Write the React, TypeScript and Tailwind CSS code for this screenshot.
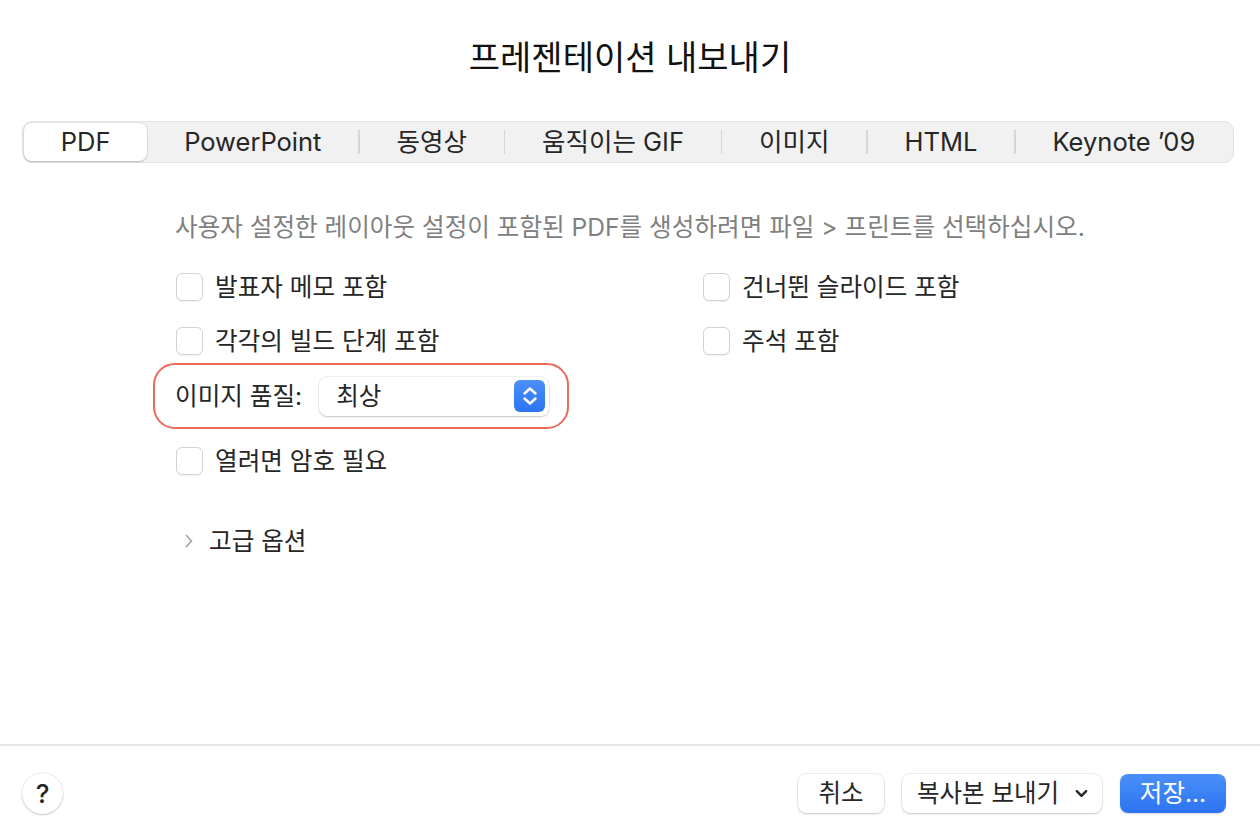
import React from "react";

const FONT = "font-['Inter','Noto_Sans_CJK_KR',sans-serif]";

const tabs = ["PDF", "PowerPoint", "동영상", "움직이는 GIF", "이미지", "HTML", "Keynote ’09"];

function Tabs() {
  return (
    <div className="ml-[22px] mt-[46px] w-[1212px] h-[42px] rounded-[10px] bg-[#f1f1f1] border border-[#e4e4e4] flex items-center p-px">
      {tabs.map((t, i) => {
        const active = i === 0;
        const showSep = i > 1;
        return (
          <div key={t} className="flex-auto flex items-stretch h-full">
            {showSep && <div className="w-[1.5px] h-[24px] self-center bg-[#d6d6d6]" />}
            <div
              className={
                "flex-1 flex items-center justify-center whitespace-nowrap text-[25.5px] text-[#262626] " +
                (active ? "bg-white rounded-[8px] shadow-[0_1px_2px_rgba(0,0,0,0.2),0_0_0_0.5px_rgba(0,0,0,0.08)]" : "")
              }
            >
              {t}
            </div>
          </div>
        );
      })}
    </div>
  );
}

function Checkbox({ label }: { label: string }) {
  return (
    <div className="flex items-center h-[40px]">
      <div className="w-[27px] h-[28px] rounded-[6px] border border-[#d3d3d3] bg-white shadow-[0_1px_1px_rgba(0,0,0,0.06)]" />
      <span className="ml-[12px] text-[24.6px] text-[#262626] whitespace-nowrap">{label}</span>
    </div>
  );
}

function Stepper() {
  return (
    <div className="w-[31px] h-[32px] rounded-[6px] bg-gradient-to-b from-[#4a8ff8] to-[#2c74f2] flex items-center justify-center">
      <svg viewBox="0 0 16 22" className="w-[16px] h-[22px]" fill="none" stroke="white" strokeWidth="2.5" strokeLinecap="round" strokeLinejoin="round">
        <path d="M2.5 8.5L8 3.5L13.5 8.5" />
        <path d="M2.5 13.5L8 18.5L13.5 13.5" />
      </svg>
    </div>
  );
}

export default function App() {
  return (
    <div className={"w-[1260px] h-[840px] bg-white flex flex-col " + FONT}>
      <h1 className="pt-[36px] h-[75px] text-center text-[34px] leading-[44px] text-[#111]">프레젠테이션 내보내기</h1>

      <Tabs />

      <div className="pl-[175px] mt-[44px]">
        <p className="h-[40px] flex items-center text-[24.6px] text-[#808080] whitespace-nowrap">
          사용자 설정한 레이아웃 설정이 포함된 PDF를 생성하려면 파일 &gt; 프린트를 선택하십시오.
        </p>

        <div className="mt-[20px] grid grid-cols-[527px_1fr] gap-y-[14px] pl-px">
          <Checkbox label="발표자 메모 포함" />
          <Checkbox label="건너뛴 슬라이드 포함" />
          <Checkbox label="각각의 빌드 단계 포함" />
          <Checkbox label="주석 포함" />
        </div>

        <div className="mt-[2px] -ml-[22px] w-[416px] h-[66px] rounded-[22px] border-[2.5px] border-[#ec6a5a] flex items-center pl-[20px]">
          <span className="text-[24.6px] text-[#262626] whitespace-nowrap">이미지 품질:</span>
          <div className="ml-[17px] w-[230px] h-[39px] rounded-[8px] bg-white shadow-[0_1px_2px_rgba(0,0,0,0.18),0_0_0_0.5px_rgba(0,0,0,0.1)] flex items-center justify-between pl-[17px] pr-[4px]">
            <span className="text-[24.6px] text-[#262626]">최상</span>
            <Stepper />
          </div>
        </div>

        <div className="mt-[12px] pl-px">
          <Checkbox label="열려면 암호 필요" />
        </div>

        <div className="mt-[40px] h-[40px] flex items-center pl-[10px]">
          <svg viewBox="0 0 8 14" className="w-[8px] h-[14px]" fill="none" stroke="#a8a8a8" strokeWidth="1.8" strokeLinecap="round" strokeLinejoin="round">
            <path d="M1.5 1.5L6.5 7L1.5 12.5" />
          </svg>
          <span className="ml-[16px] text-[24.6px] text-[#262626]">고급 옵션</span>
        </div>
      </div>

      <div className="flex-1" />

      <div className="h-[2px] bg-[#e6e6e6]" />

      <div className="h-[94px] flex items-center pl-[22px] pr-[34px]">
        <div className="w-[41px] h-[41px] rounded-full bg-white shadow-[0_1px_2px_rgba(0,0,0,0.2),0_0_0_0.5px_rgba(0,0,0,0.1)] flex items-center justify-center text-[26px] font-medium text-[#262626]">
          ?
        </div>
        <div className="flex-1" />
        <button className="w-[86px] h-[39px] rounded-[8px] bg-white shadow-[0_1px_2px_rgba(0,0,0,0.18),0_0_0_0.5px_rgba(0,0,0,0.12)] text-[24.5px] text-[#262626]">
          취소
        </button>
        <button className="ml-[18px] w-[200px] h-[39px] rounded-[8px] bg-white shadow-[0_1px_2px_rgba(0,0,0,0.18),0_0_0_0.5px_rgba(0,0,0,0.12)] flex items-center pl-[15px] pr-[14px] text-[24.5px] text-[#262626]">
          <span>복사본 보내기</span>
          <span className="flex-1" />
          <svg viewBox="0 0 14 9" className="w-[13px] h-[9px]" fill="none" stroke="#262626" strokeWidth="2.6" strokeLinecap="round" strokeLinejoin="round">
            <path d="M2 2L7 7L12 2" />
          </svg>
        </button>
        <button className="ml-[18px] w-[106px] h-[39px] rounded-[8px] bg-gradient-to-b from-[#4a8ff8] to-[#2c74f2] shadow-[0_1px_2px_rgba(0,0,0,0.15)] text-[24.5px] text-white">
          저장...
        </button>
      </div>
    </div>
  );
}
